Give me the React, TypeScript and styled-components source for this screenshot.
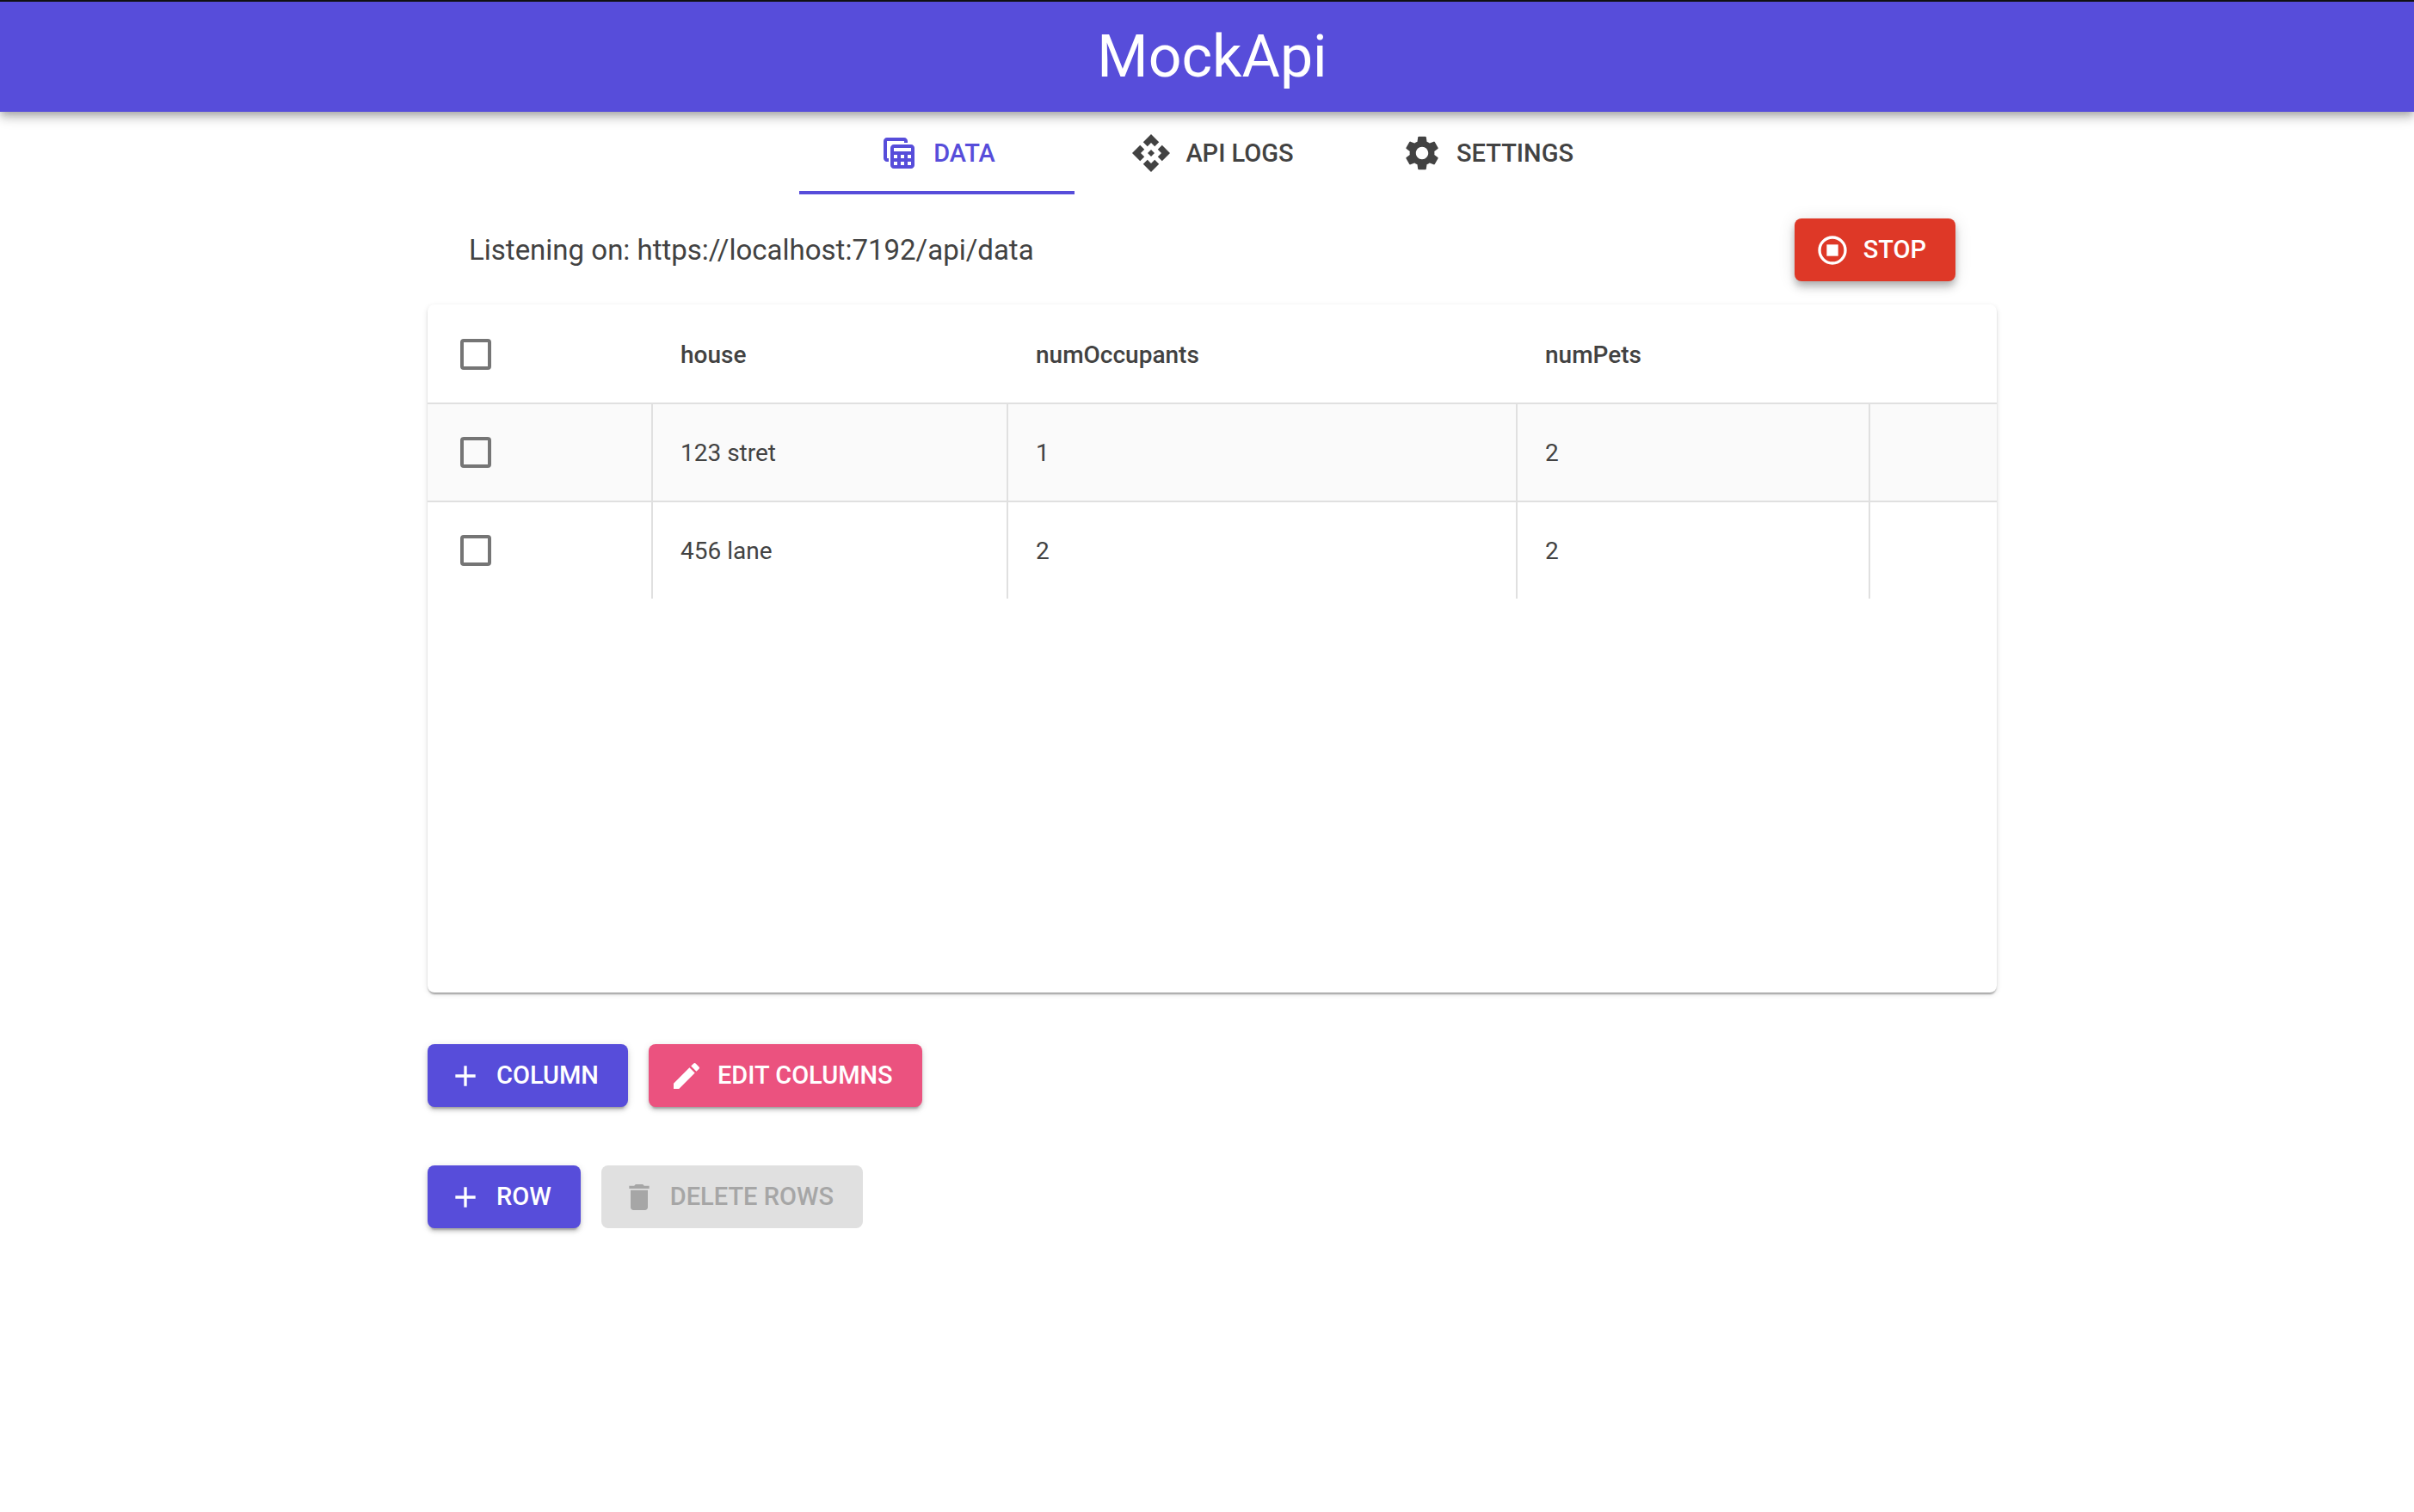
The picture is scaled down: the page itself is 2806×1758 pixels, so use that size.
import React, { useState } from "react";
import styled, { createGlobalStyle } from "styled-components";
import { MdAdd, MdApi, MdDelete, MdEdit, MdSettings } from "react-icons/md";

const color = {
  primary: "#574dda",
  secondary: "#eb527f",
  error: "#de3827",
  text: "#424242",
  line: "#e0e0e0",
  stripe: "#fafafa",
  box: "#757575",
  disabled: "#a6a6a6",
};

const raised =
  "0 6px 2px -4px rgba(0,0,0,.2), 0 4px 4px rgba(0,0,0,.14), 0 2px 10px rgba(0,0,0,.12)";
const lifted =
  "0 4px 8px -2px rgba(0,0,0,.2), 0 8px 10px rgba(0,0,0,.14), 0 2px 20px rgba(0,0,0,.12)";
const resting =
  "0 4px 2px -2px rgba(0,0,0,.2), 0 2px 2px rgba(0,0,0,.14), 0 2px 6px rgba(0,0,0,.12)";

const GlobalStyle = createGlobalStyle`
  *, *::before, *::after { box-sizing: border-box; }
  body {
    margin: 0;
    background: #fff;
    color: ${color.text};
    font-family: Roboto, "Liberation Sans", sans-serif;
    font-size: 28px;
    line-height: 41px;
  }
`;

const AppBar = styled.header`
  display: flex;
  align-items: center;
  justify-content: center;
  height: 130px;
  padding-left: 12px;
  border-top: 2px solid #111;
  background: ${color.primary};
  color: #fff;
  box-shadow: ${lifted};
`;

const Title = styled.h1`
  margin: 0;
  font-size: 68px;
  font-weight: 400;
  line-height: 80px;
`;

const Main = styled.main`
  padding-left: 12px;
`;

const TabBar = styled.nav`
  display: flex;
  justify-content: center;
`;

const Tab = styled.button<{ $active: boolean }>`
  display: flex;
  align-items: center;
  justify-content: center;
  gap: 16px;
  width: 320px;
  height: 96px;
  padding: 4px 0 0;
  border: 0;
  border-bottom: 4px solid ${(p) => (p.$active ? color.primary : "transparent")};
  background: none;
  color: ${(p) => (p.$active ? color.primary : color.text)};
  font: inherit;
  font-size: 29px;
  font-weight: 500;
  text-transform: uppercase;
  cursor: pointer;

  svg {
    width: 48px;
    height: 48px;
  }
`;

const Container = styled.div`
  max-width: 1920px;
  margin: 0 auto;
  padding: 0 48px;
`;

const StatusRow = styled.div`
  display: flex;
  align-items: center;
  justify-content: space-between;
  padding: 28px 48px 27px;
`;

const StatusText = styled.p`
  margin: 0;
  font-size: 33px;
  line-height: 46px;
`;

const Button = styled.button<{ $tone: string; $lifted?: boolean }>`
  display: inline-flex;
  align-items: center;
  gap: 16px;
  padding: 12px 34px 12px 24px;
  border: 0;
  border-radius: 8px;
  background: ${(p) => p.$tone};
  color: #fff;
  box-shadow: ${(p) => (p.$lifted ? lifted : raised)};
  font: inherit;
  font-size: 29px;
  font-weight: 500;
  line-height: 49px;
  text-transform: uppercase;
  cursor: pointer;

  svg {
    width: 40px;
    height: 40px;
  }

  &:disabled {
    background: ${color.line};
    color: ${color.disabled};
    box-shadow: none;
    cursor: default;
  }
`;

const Paper = styled.section`
  min-height: 800px;
  border-radius: 8px;
  background: #fff;
  box-shadow: ${resting};
`;

const Table = styled.table`
  width: 100%;
  table-layout: fixed;
  border-collapse: separate;
  border-spacing: 0;
`;

const HeadCell = styled.th`
  height: 116px;
  padding: 2px 32px 0;
  border-bottom: 2px solid ${color.line};
  font-weight: 500;
  text-align: left;
`;

const Row = styled.tr`
  &:nth-child(odd) {
    background: ${color.stripe};
  }
`;

const Cell = styled.td`
  height: 114px;
  padding: 0 32px;
  border-right: 2px solid ${color.line};
  border-bottom: 2px solid ${color.line};

  &:last-child {
    border-right: 0;
  }

  ${Row}:last-child & {
    height: 112px;
    border-bottom: 0;
  }
`;

const Checkbox = styled.input`
  appearance: none;
  display: block;
  width: 36px;
  height: 36px;
  margin: 0 6px;
  border: 4px solid ${color.box};
  border-radius: 4px;
  cursor: pointer;

  &:checked {
    border-color: ${color.primary};
    background: ${color.primary};
  }
`;

const Actions = styled.div`
  display: flex;
  flex-direction: column;
  gap: 68px;
  padding: 60px 0;
`;

const ButtonRow = styled.div`
  display: flex;
  gap: 24px;
`;

function TableViewIcon() {
  return (
    <svg viewBox="0 0 24 24" fill="currentColor" aria-hidden="true">
      <path d="M19 7H9c-1.1 0-2 .9-2 2v10c0 1.1.9 2 2 2h10c1.1 0 2-.9 2-2V9c0-1.1-.9-2-2-2zm0 2v2H9V9h10zm-6 6v-2h2v2h-2zm2 2v2h-2v-2h2zm-4-2H9v-2h2v2zm6-2h2v2h-2v-2zm-8 4h2v2H9v-2zm8 2v-2h2v2h-2zM6 17H5c-1.1 0-2-.9-2-2V5c0-1.1.9-2 2-2h10c1.1 0 2 .9 2 2v1h-2V5H5v10h1v2z" />
    </svg>
  );
}

function StopIcon() {
  return (
    <svg viewBox="0 0 24 24" aria-hidden="true">
      <circle cx="12" cy="12" r="9" fill="none" stroke="currentColor" strokeWidth="2" />
      <path d="M8 8h8v8H8z" fill="currentColor" />
    </svg>
  );
}

const tabs = [
  { label: "Data", icon: <TableViewIcon /> },
  { label: "Api Logs", icon: <MdApi /> },
  { label: "Settings", icon: <MdSettings /> },
];

const columns = [
  { key: "house", width: 413 },
  { key: "numOccupants", width: 592 },
  { key: "numPets", width: 410 },
] as const;

const rows = [
  { house: "123 stret", numOccupants: 1, numPets: 2 },
  { house: "456 lane", numOccupants: 2, numPets: 2 },
];

export default function App() {
  const [active, setActive] = useState("Data");
  const [selected, setSelected] = useState<number[]>([]);

  const toggle = (i: number) =>
    setSelected((s) => (s.includes(i) ? s.filter((n) => n !== i) : [...s, i]));
  const allSelected = selected.length === rows.length;

  return (
    <>
      <GlobalStyle />
      <AppBar>
        <Title>MockApi</Title>
      </AppBar>
      <Main>
        <TabBar>
          {tabs.map((t) => (
            <Tab key={t.label} $active={active === t.label} onClick={() => setActive(t.label)}>
              {t.icon}
              {t.label}
            </Tab>
          ))}
        </TabBar>
        <Container>
          <StatusRow>
            <StatusText>Listening on: https://localhost:7192/api/data</StatusText>
            <Button $tone={color.error} $lifted>
              <StopIcon />
              Stop
            </Button>
          </StatusRow>
          <Paper>
            <Table>
              <colgroup>
                <col width={262} />
                {columns.map((c) => (
                  <col key={c.key} width={c.width} />
                ))}
                <col />
              </colgroup>
              <thead>
                <tr>
                  <HeadCell>
                    <Checkbox
                      type="checkbox"
                      aria-label="Select all rows"
                      checked={allSelected}
                      onChange={() => setSelected(allSelected ? [] : rows.map((_, i) => i))}
                    />
                  </HeadCell>
                  {columns.map((c) => (
                    <HeadCell key={c.key}>{c.key}</HeadCell>
                  ))}
                  <HeadCell />
                </tr>
              </thead>
              <tbody>
                {rows.map((r, i) => (
                  <Row key={r.house}>
                    <Cell>
                      <Checkbox
                        type="checkbox"
                        aria-label={`Select ${r.house}`}
                        checked={selected.includes(i)}
                        onChange={() => toggle(i)}
                      />
                    </Cell>
                    {columns.map((c) => (
                      <Cell key={c.key}>{r[c.key]}</Cell>
                    ))}
                    <Cell />
                  </Row>
                ))}
              </tbody>
            </Table>
          </Paper>
          <Actions>
            <ButtonRow>
              <Button $tone={color.primary}>
                <MdAdd />
                Column
              </Button>
              <Button $tone={color.secondary}>
                <MdEdit />
                Edit Columns
              </Button>
            </ButtonRow>
            <ButtonRow>
              <Button $tone={color.primary}>
                <MdAdd />
                Row
              </Button>
              <Button $tone={color.error} disabled={selected.length === 0}>
                <MdDelete />
                Delete Rows
              </Button>
            </ButtonRow>
          </Actions>
        </Container>
      </Main>
    </>
  );
}
